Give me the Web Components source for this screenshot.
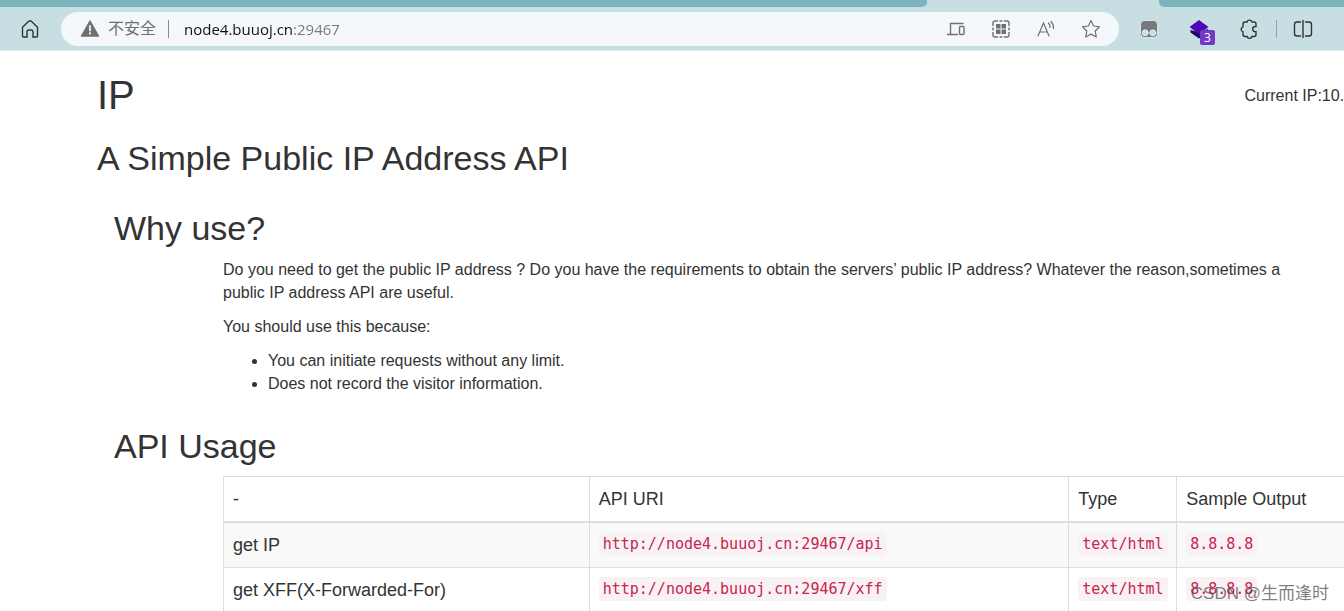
<!DOCTYPE html>
<html lang="en">
<head>
<meta charset="utf-8">
<title>IP</title>
<style>
html, body { margin: 0; background: #fff; }
body { overflow: hidden; min-height: 100vh; color: #333; font: 16px/23px "Liberation Sans", "Noto Sans CJK SC", sans-serif; }
</style>
</head>
<body>
<browser-chrome></browser-chrome>
<ip-page>
  <page-section heading="Why use?">
    <p>Do you need to get the public IP address ? Do you have the requirements to obtain the servers’ public IP address? Whatever the reason,sometimes a public IP address API are useful.</p>
    <p>You should use this because:</p>
    <ul>
      <li>You can initiate requests without any limit.</li>
      <li>Does not record the visitor information.</li>
    </ul>
  </page-section>
  <page-section heading="API Usage">
    <api-table></api-table>
  </page-section>
</ip-page>
<image-mark>CSDN @生而逢时</image-mark>
<script>
const define = (name, html, setup) => customElements.define(name, class extends HTMLElement {
  constructor() {
    super();
    this.attachShadow({ mode: "open" }).innerHTML = html;
  }
  connectedCallback() { if (setup) setup(this, this.shadowRoot); }
});

const glyphs = {
  home: `<path d="M3.500 9.300 9.700 3.300a1.900 1.900 0 0 1 2.600 0l6.200 6v8.700a1 1 0 0 1-1 1h-3.500v-5a2 2 0 0 0-2-2h-2a2 2 0 0 0-2 2v5H4.500a1 1 0 0 1-1-1z"/>`,
  warn: `<path d="M11 3 19.500 18H2.500z" fill="currentColor" stroke-linejoin="round"/><path d="M11 8v4.500M11 15v.8" stroke="#f4f8fa" stroke-width="1.800"/>`,
  devices: `<path d="M18 5.500H5.500V16M2.500 16.500H12.500"/><rect x="14.500" y="8.500" width="4.500" height="8" rx="1"/>`,
  qr: `<path d="M3 8V5a2 2 0 0 1 2-2h3M9.500 3h3M14 3h3a2 2 0 0 1 2 2v3M19 9.500v3M19 14v3a2 2 0 0 1-2 2h-3M12.500 19h-3M8 19H5a2 2 0 0 1-2-2v-3M3 12.500v-3" stroke-linecap="butt"/><path d="M6 6h4.500v4.500H6zM11.500 6H16v4.500h-4.500zM6 11.500h4.500V16H6zM11.500 11.500H16V16h-4.500z" fill="currentColor" stroke="none"/>`,
  read: `<path d="M3 18 8.500 5 14 18M5 14h7M13.500 5a6 6 0 0 1 1.500 4.500M16 3.500a9 9 0 0 1 2.500 7" stroke-width="1.200"/>`,
  star: `<path d="m11 2.500 2.600 5.500 6 .8-4.400 4.200 1.100 6L11 16.100 5.700 19l1.100-6-4.400-4.200 6-.8z" stroke-linejoin="round" stroke-width="1.200"/>`,
  monkey: `<rect x="2.500" y="2.500" width="17" height="17" rx="4" fill="#757b7b" stroke="#dde7e8" stroke-width="1"/><circle cx="7.200" cy="14.800" r="3" fill="#c7dfe3" stroke="#f3f7f7" stroke-width=".8"/><circle cx="14.800" cy="14.800" r="3" fill="#c7dfe3" stroke="#f3f7f7" stroke-width=".8"/>`,
  layers: `<path d="m2.500 12 8.500 2 9-3v3l-9 6.500-8.500-6z" fill="#23066b" stroke="none"/><path d="m11 2 9.500 7-9.500 7-9.500-7z" fill="#4b08b5" stroke="none"/>`,
  puzzle: `<path d="M7 4h2a2.600 2.600 0 0 1 5 0h2a2 2 0 0 1 2 2v2.500h-.7a2.600 2.600 0 0 0 0 5.200h.7V16.500a2 2 0 0 1-2 2h-2a2.600 2.600 0 0 1-5 0H7a2 2 0 0 1-2-2v-2.700a2.600 2.600 0 0 1 0-5V6a2 2 0 0 1 2-2z"/>`,
  split: `<path d="M8.500 4H5a2.500 2.500 0 0 0-2.500 2.500v9A2.500 2.500 0 0 0 5 18h3.500M13.500 4H17a2.500 2.500 0 0 1 2.500 2.500v9A2.500 2.500 0 0 1 17 18h-3.500M11 2.500v17"/>`
};

define("glyph-icon", `
<style>
:host { display: block; width: 22px; height: 22px; }
svg { display: block; width: 22px; height: 22px; fill: none; stroke: currentColor; stroke-width: 1.4; stroke-linecap: round; }
</style>
<svg viewBox="0 0 22 22" aria-hidden="true"></svg>`,
(el, root) => { root.querySelector("svg").innerHTML = glyphs[el.getAttribute("name")]; });

define("browser-chrome", `
<style>
:host { display: block; background: #c7dfe3; border-bottom: 1px solid #dbe8eb; }
.tabs { display: flex; height: 7px; justify-content: space-between; }
.tabs i { background: #7db5bf; }
.left { flex: 927; border-radius: 0 0 5px 0; }
.active { flex: 232; }
.tabs .active { background: none; }
.right { flex: 185; border-radius: 0 0 0 5px; }
.bar { display: flex; align-items: center; height: 34px; padding: 5px 30px 4px 19px; color: #333; }
button { display: block; position: relative; padding: 0; border: 0; background: none; color: inherit; }
.address { flex: 1; display: flex; align-items: center; height: 34px; margin: 0 19px 0 20px; padding: 0 17px 0 18px; border-radius: 17px; background: #f4f8fa; color: #707070; box-sizing: border-box; }
.secure { display: flex; align-items: center; gap: 7px; font: 16px/22px "Liberation Sans", "Noto Sans CJK SC", sans-serif; }
.rule { width: 1px; height: 18px; background: #8a8a8a; }
.secure + .rule { margin: 0 15px 0 12px; }
input { flex: 1; min-width: 0; height: 24px; padding: 0; border: 0; outline: 0; font: 15px/24px "Open Sans", sans-serif; color: transparent; background: linear-gradient(90deg, #111 109px, #777 109px); background-clip: text; -webkit-background-clip: text; }
.inside { display: flex; gap: 23px; }
.tools { display: flex; align-items: center; gap: 28px; }
.end { display: flex; align-items: center; gap: 15px; margin-left: -12px; }
.end .rule { background: #94a5a8; }
.count { position: absolute; left: 12px; top: 12px; width: 15px; height: 15px; border-radius: 2px; background: #7338c4; color: #fff; font: 12px/15px "Open Sans", sans-serif; text-align: center; }
</style>
<div class="tabs"><i class="left"></i><i class="active"></i><i class="right"></i></div>
<div class="bar">
  <button aria-label="Home"><glyph-icon name="home"></glyph-icon></button>
  <div class="address">
    <button class="secure"><glyph-icon name="warn"></glyph-icon><span>不安全</span></button>
    <span class="rule"></span>
    <input aria-label="Address" value="node4.buuoj.cn:29467" spellcheck="false">
    <div class="inside">
      <button aria-label="Devices"><glyph-icon name="devices"></glyph-icon></button>
      <button aria-label="QR code"><glyph-icon name="qr"></glyph-icon></button>
      <button aria-label="Read aloud"><glyph-icon name="read"></glyph-icon></button>
      <button aria-label="Favourite"><glyph-icon name="star"></glyph-icon></button>
    </div>
  </div>
  <div class="tools">
    <button aria-label="Scripts"><glyph-icon name="monkey"></glyph-icon></button>
    <button aria-label="Layers"><glyph-icon name="layers"></glyph-icon><span class="count">3</span></button>
    <button aria-label="Extensions"><glyph-icon name="puzzle"></glyph-icon></button>
    <div class="end"><span class="rule"></span><button aria-label="Split screen"><glyph-icon name="split"></glyph-icon></button></div>
  </div>
</div>`);

define("ip-page", `
<style>
:host { display: block; padding: 22px 0 0 97px; }
header { display: flex; align-items: center; justify-content: space-between; margin-right: -9px; }
h1, h2 { margin: 0; font-weight: 400; }
h1 { font-size: 40px; line-height: 44px; }
h2 { font-size: 34px; line-height: 38px; margin-top: 22px; }
span { white-space: nowrap; }
</style>
<header><h1>IP</h1><span>Current IP:10.2</span></header>
<h2>A Simple Public IP Address API</h2>
<slot></slot>`);

define("page-section", `
<style>
:host { display: block; padding: 32px 34px 0 17px; }
h2 { margin: 0; font-size: 34px; font-weight: 400; line-height: 38px; }
.body { padding: 11px 0 0 109px; }
::slotted(p) { margin: 0 0 11px; }
::slotted(ul) { margin: 0; padding-left: 45px; }
</style>
<h2></h2>
<div class="body"><slot></slot></div>`,
(el, root) => { root.querySelector("h2").textContent = el.getAttribute("heading"); });

define("api-table", `
<style>
:host { display: block; margin-right: -113px; }
table { width: 100%; table-layout: fixed; border-collapse: collapse; font-size: 18px; line-height: 26px; }
col:nth-child(1) { width: 30.5%; }
col:nth-child(2) { width: 40%; }
col:nth-child(3) { width: 9%; }
th, td { padding: 9px; border: 1px solid #ddd; font-weight: 400; text-align: left; }
th { border-bottom-width: 2px; }
tbody tr:nth-child(odd) { background: #f9f9f9; }
code { padding: 3px 4px; border-radius: 4px; background: #f9f2f4; color: #c7254e; font: 15px/20px "DejaVu Sans Mono", monospace; vertical-align: 2px; }
</style>
<table>
  <colgroup><col><col><col><col></colgroup>
  <thead><tr><th>-</th><th>API URI</th><th>Type</th><th>Sample Output</th></tr></thead>
  <tbody>
    <tr><td>get IP</td><td><code>http://node4.buuoj.cn:29467/api</code></td><td><code>text/html</code></td><td><code>8.8.8.8</code></td></tr>
    <tr><td>get XFF(X-Forwarded-For)</td><td><code>http://node4.buuoj.cn:29467/xff</code></td><td><code>text/html</code></td><td><code>8.8.8.8</code></td></tr>
  </tbody>
</table>`);

define("image-mark", `
<style>
:host { position: absolute; right: 15px; bottom: 5px; font: 17px/24px "Liberation Sans", "Noto Sans CJK SC", sans-serif; color: rgba(70, 70, 70, .7); white-space: nowrap; }
</style>
<slot></slot>`);
</script>
</body>
</html>
